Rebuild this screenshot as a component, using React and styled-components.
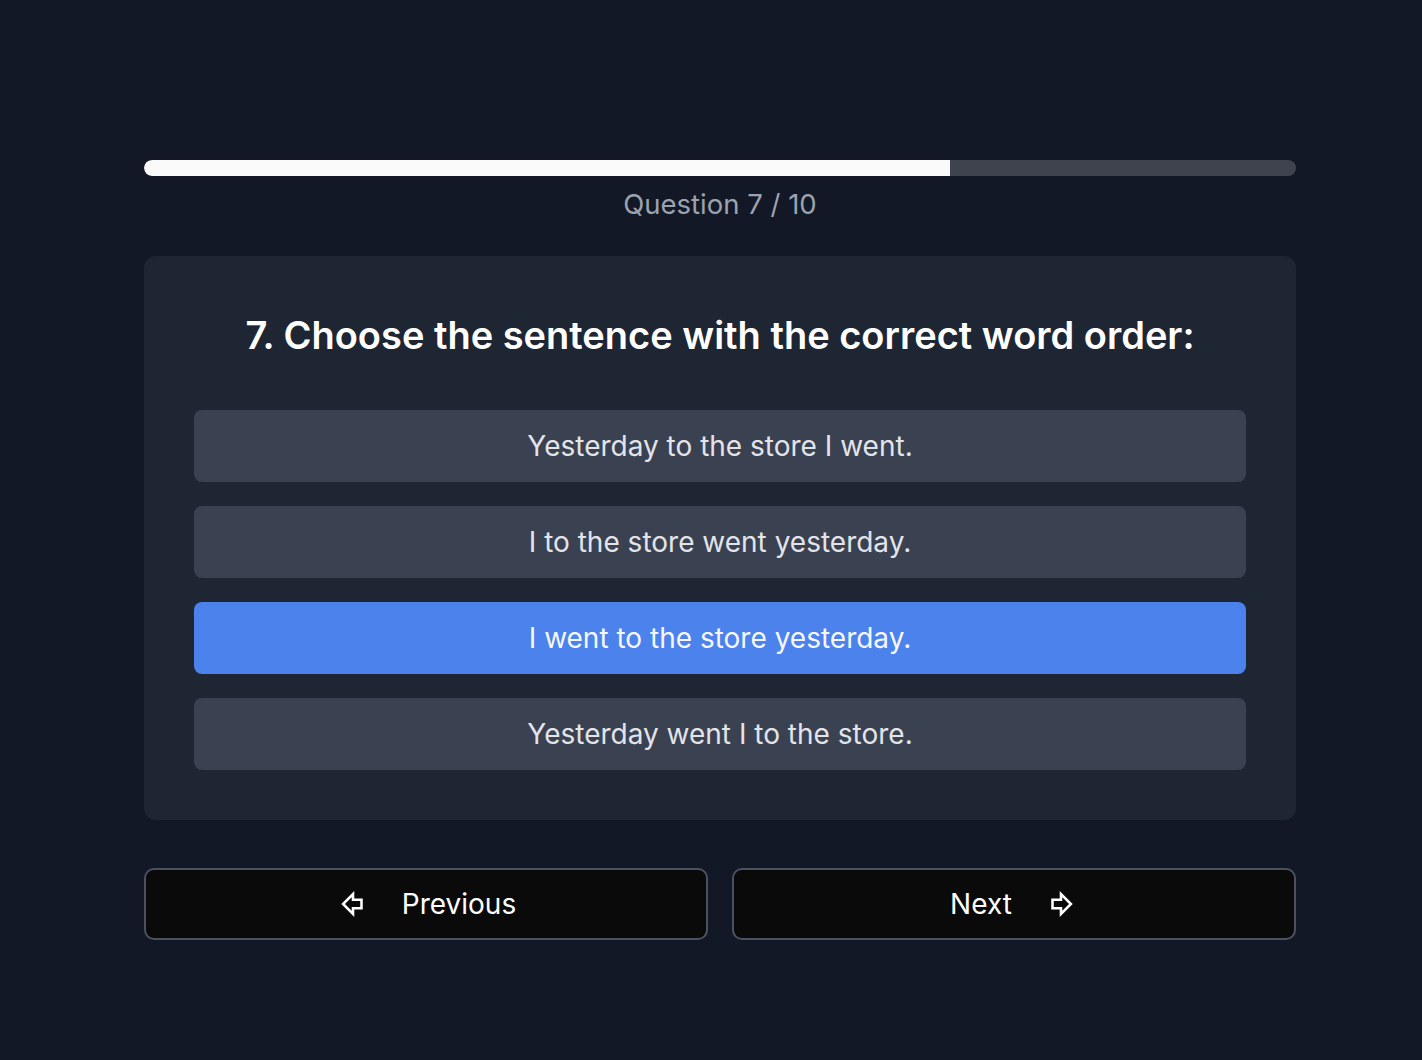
import React, { useState } from 'react'
import styled, { createGlobalStyle } from 'styled-components'

const GlobalStyle = createGlobalStyle`
  html, body {
    margin: 0;
    padding: 0;
    background: #121826;
    font-family: Inter, "Noto Sans", sans-serif;
  }
`

const Page = styled.div`
  min-height: 1060px;
  box-sizing: border-box;
  padding: 160px 126px 0 144px;
`

const Quiz = styled.div`
  width: 1152px;
  display: flex;
  flex-direction: column;
`

const Track = styled.div`
  height: 16px;
  border-radius: 8px;
  background: #3f434d;
  overflow: hidden;
`

const Fill = styled.div`
  height: 100%;
  background: #fafafa;
  border-radius: 8px 0 0 8px;
`

const Counter = styled.div`
  margin-top: 12px;
  text-align: center;
  color: #9ca3af;
  font-size: 27.5px;
  line-height: 32px;
`

const Card = styled.div`
  margin-top: 36px;
  background: #1f2633;
  border-radius: 12px;
  padding: 54px 50px 50px;
`

const Title = styled.h2`
  margin: 0 0 50px;
  text-align: center;
  color: #ffffff;
  font-size: 38px;
  line-height: 50px;
  font-weight: 600;
`

const Options = styled.div`
  display: flex;
  flex-direction: column;
  gap: 24px;
`

const Option = styled.button`
  height: 72px;
  border: none;
  border-radius: 8px;
  background: ${p => (p.selected ? '#4c82ec' : '#3a4150')};
  color: ${p => (p.selected ? '#f5f7fb' : '#e2e4ea')};
  font-family: inherit;
  font-size: 28px;
  cursor: pointer;
`

const Nav = styled.div`
  margin-top: 48px;
  display: grid;
  grid-template-columns: 1fr 1fr;
  gap: 24px;
`

const NavButton = styled.button`
  height: 72px;
  box-sizing: border-box;
  border: 2px solid #4b5160;
  border-radius: 10px;
  background: #0a0a0a;
  color: #ffffff;
  font-family: inherit;
  font-size: 28px;
  display: flex;
  align-items: center;
  justify-content: center;
  gap: 32px;
  cursor: pointer;
`

const Svg = styled.svg`
  width: 34px;
  height: 34px;
  flex: none;
  ${p => (p.right ? 'transform: scaleX(-1);' : '')}
`

const ArrowIcon = ({ right }) => (
  <Svg right={right} viewBox="0 0 24 24" fill="none">
    <path
      d="M18 15h-6v4l-7-7 7-7v4h6v6z"
      stroke="#ffffff"
      strokeWidth="1.8"
      strokeLinejoin="miter"
    />
  </Svg>
)

const options = [
  'Yesterday to the store I went.',
  'I to the store went yesterday.',
  'I went to the store yesterday.',
  'Yesterday went I to the store.'
]

const App = () => {
  const [selected, setSelected] = useState(2)
  return (
    <Page>
      <GlobalStyle />
      <Quiz>
        <Track>
          <Fill style={{ width: `${(7 / 10) * 100}%` }} />
        </Track>
        <Counter>Question 7 / 10</Counter>
        <Card>
          <Title>7. Choose the sentence with the correct word order:</Title>
          <Options>
            {options.map((o, i) => (
              <Option key={o} selected={i === selected} onClick={() => setSelected(i)}>
                {o}
              </Option>
            ))}
          </Options>
        </Card>
        <Nav>
          <NavButton>
            <ArrowIcon />
            Previous
          </NavButton>
          <NavButton>
            Next
            <ArrowIcon right />
          </NavButton>
        </Nav>
      </Quiz>
    </Page>
  )
}

export default App
